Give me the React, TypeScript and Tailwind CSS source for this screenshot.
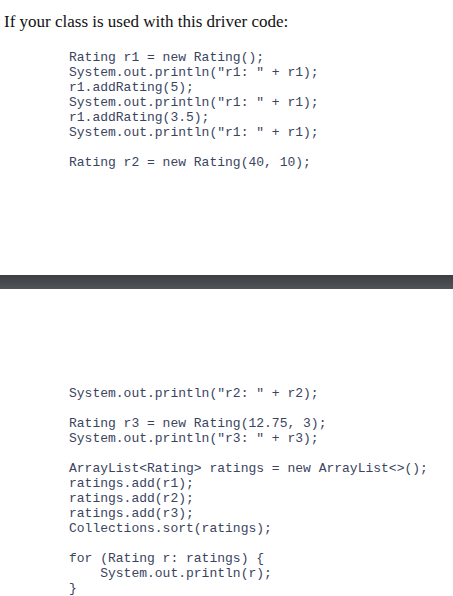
export default function App() {
  const block1 = [
    "Rating r1 = new Rating();",
    'System.out.println("r1: " + r1);',
    "r1.addRating(5);",
    'System.out.println("r1: " + r1);',
    "r1.addRating(3.5);",
    'System.out.println("r1: " + r1);',
    "",
    "Rating r2 = new Rating(40, 10);",
  ];
  const block2 = [
    'System.out.println("r2: " + r2);',
    "",
    "Rating r3 = new Rating(12.75, 3);",
    'System.out.println("r3: " + r3);',
    "",
    "ArrayList<Rating> ratings = new ArrayList<>();",
    "ratings.add(r1);",
    "ratings.add(r2);",
    "ratings.add(r3);",
    "Collections.sort(ratings);",
    "",
    "for (Rating r: ratings) {",
    "    System.out.println(r);",
    "}",
  ];
  const codeCls =
    "pl-[69px] font-['Liberation_Mono','Courier_New',monospace] text-[13px] leading-[15px] text-[#3a4460] whitespace-pre";
  return (
    <div className="w-[453px] h-[596px] bg-white overflow-hidden flex flex-col">
      <div className="pt-[12px] pl-[4px] font-['Liberation_Serif',serif] text-[17px] leading-[20px] text-[#111]">
        If your class is used with this driver code:
      </div>
      <div className={`mt-[18px] ${codeCls}`}>
        {block1.map((l, i) => (
          <div key={i} className="h-[15px]">
            {l}
          </div>
        ))}
      </div>
      <div className="mt-[105px] h-[14px] w-full bg-gradient-to-b from-[#3b3e41] to-[#50545a]" />
      <div className={`mt-[97px] ${codeCls}`}>
        {block2.map((l, i) => (
          <div key={i} className="h-[15px]">
            {l}
          </div>
        ))}
      </div>
    </div>
  );
}
